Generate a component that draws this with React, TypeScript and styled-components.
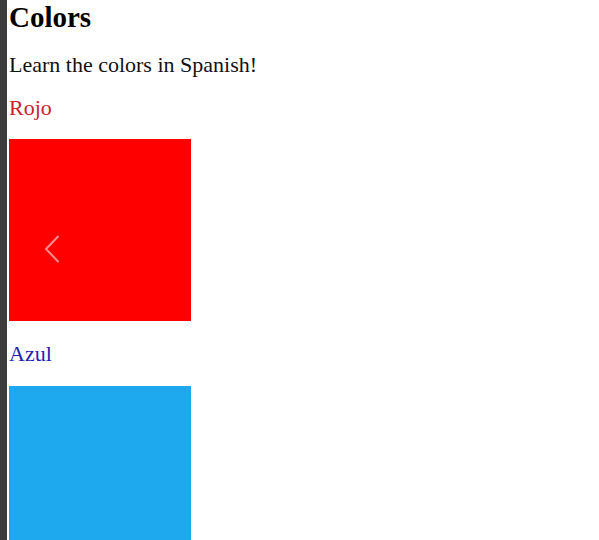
import React from "react";
import styled, { createGlobalStyle } from "styled-components";

const GlobalStyle = createGlobalStyle`
  html, body {
    margin: 0;
    padding: 0;
    background: #ffffff;
  }
  body {
    font-family: "Liberation Serif", "Times New Roman", serif;
  }
`;

const Page = styled.div`
  display: flex;
  height: 540px;
  overflow: hidden;
`;

const SideBar = styled.div`
  width: 7px;
  flex: none;
  background: #3c3c3c;
`;

const Content = styled.main`
  display: flex;
  flex-direction: column;
  align-items: flex-start;
  margin-left: 2px;
  padding-top: 1px;
`;

const Title = styled.h1`
  flex: none;
  margin: 0;
  font-family: "Liberation Serif", "Times New Roman", serif;
  font-size: 29px;
  line-height: 32px;
  font-weight: bold;
  color: #000000;
`;

const Intro = styled.p`
  flex: none;
  margin: 19px 0 0;
  font-family: "Liberation Serif", "Times New Roman", serif;
  font-size: 22px;
  line-height: 25px;
  color: #111111;
`;

const ColorName = styled.p<{ $color: string; $gap: number }>`
  flex: none;
  margin: ${(p) => p.$gap}px 0 0;
  font-family: "Liberation Serif", "Times New Roman", serif;
  font-size: 22px;
  line-height: 25px;
  color: ${(p) => p.$color};
`;

const Swatch = styled.div<{ $bg: string; $gap: number }>`
  position: relative;
  flex: none;
  margin-top: ${(p) => p.$gap}px;
  width: 182px;
  height: 182px;
  background: ${(p) => p.$bg};
`;

const PrevArrow = styled.svg`
  position: absolute;
  left: 35px;
  top: 95px;
  width: 16px;
  height: 30px;
`;

export default function App() {
  return (
    <>
      <GlobalStyle />
      <Page>
        <SideBar />
        <Content>
          <Title>Colors</Title>
          <Intro>Learn the colors in Spanish!</Intro>
          <ColorName $color="#c8232b" $gap={18}>Rojo</ColorName>
          <Swatch $bg="#ff0000" $gap={19}>
            <PrevArrow viewBox="0 0 16 30" fill="none">
              <path
                d="M14.5 2 L2 15 L14.5 28"
                stroke="rgba(255,255,255,0.55)"
                strokeWidth="2"
              />
            </PrevArrow>
          </Swatch>
          <ColorName $color="#1f1fb0" $gap={20}>Azul</ColorName>
          <Swatch $bg="#1ea8ed" $gap={20} />
        </Content>
      </Page>
    </>
  );
}
